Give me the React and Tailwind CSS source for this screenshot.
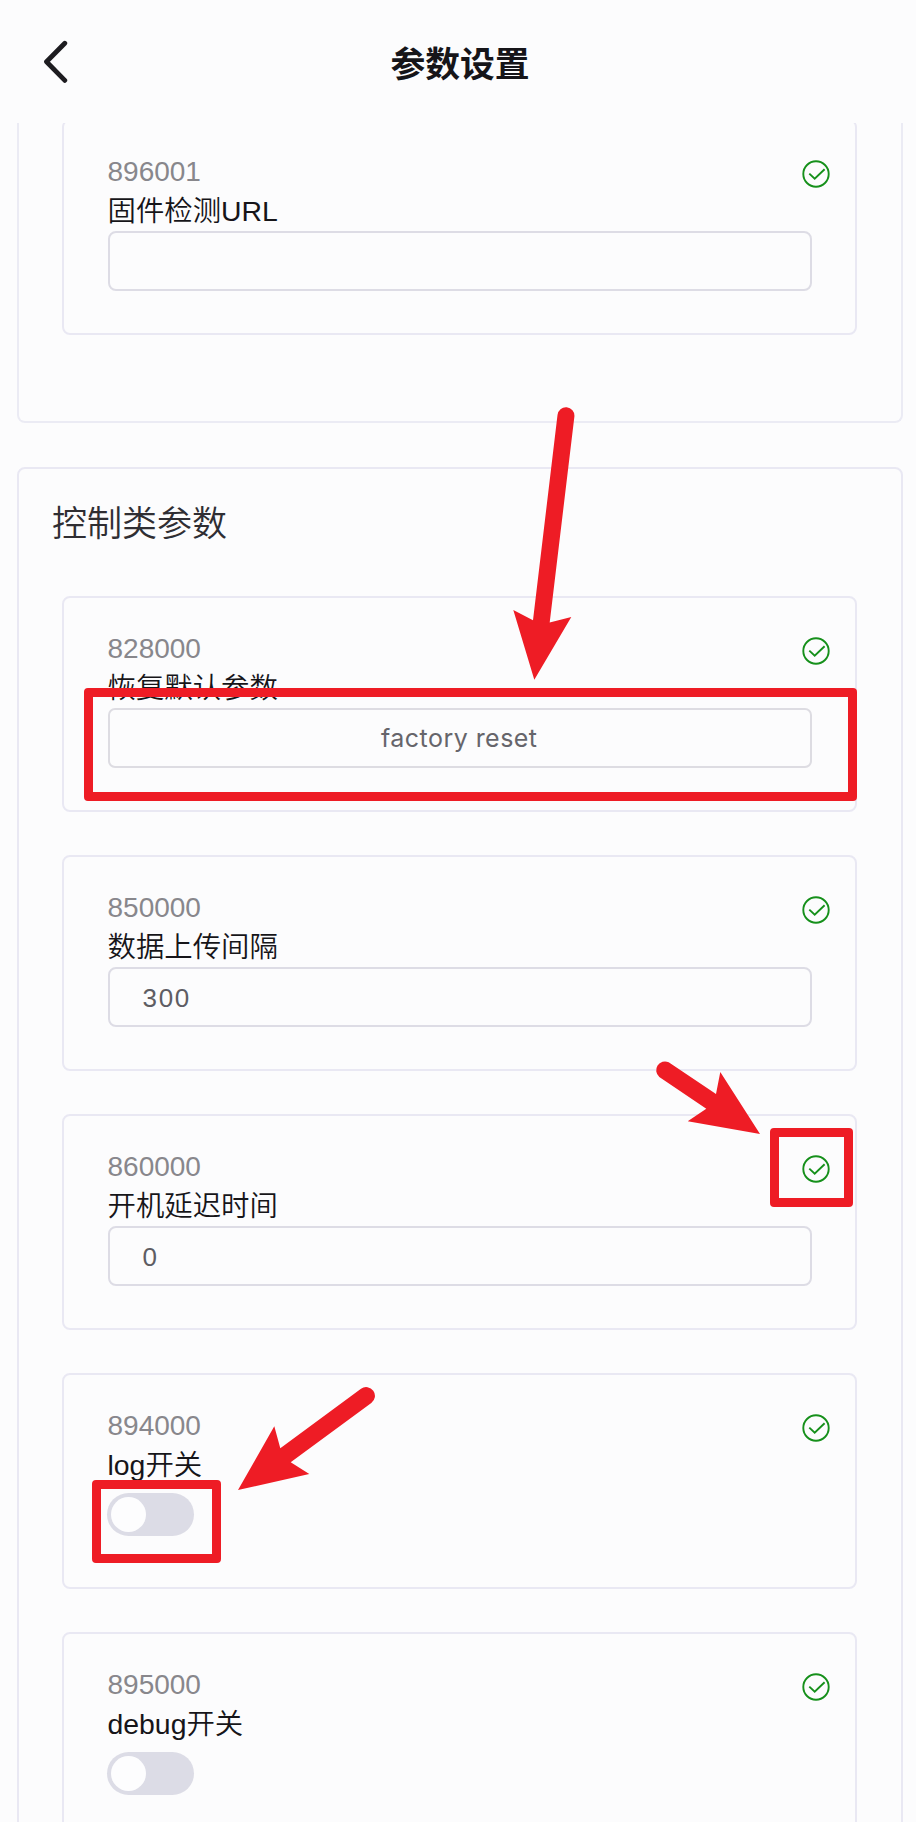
import React from "react";

const controlParams = [
  { code: "828000", label: "恢复默认参数", kind: "button", value: "factory reset" },
  { code: "850000", label: "数据上传间隔", kind: "input", value: "300" },
  { code: "860000", label: "开机延迟时间", kind: "input", value: "0" },
  { code: "894000", label: "log开关", kind: "switch" },
  { code: "895000", label: "debug开关", kind: "switch" },
];

function CheckIcon() {
  return (
    <svg className="h-7 w-7 shrink-0" viewBox="-14 -14 28 28" fill="none" stroke="#16901b" strokeWidth="1.9">
      <circle r="12.7" />
      <path d="M-6.7 -0.4 L-1.3 4.7 L8.6 -4.7" />
    </svg>
  );
}

function Control({ kind, value }) {
  if (kind === "switch") {
    return (
      <div className="mt-[8px] -ml-px flex h-[43px] w-[87px] items-center rounded-full bg-[#dcdce6] pl-[4px]">
        <div className="h-[35px] w-[35px] rounded-full bg-[#fdfdfe]" />
      </div>
    );
  }
  if (kind === "button") {
    return (
      <div className="flex h-[60px] items-center justify-center rounded-[7px] border-2 border-[#dddce2] pr-[1px] pt-[2px] font-['Inter',sans-serif] text-[25px] tracking-[0.45px] text-[#66656b]">
        {value}
      </div>
    );
  }
  return (
    <div className="flex h-[60px] items-center rounded-[8px] border-2 border-[#dddce5] pl-[33px] pt-[3px] text-[26px] tracking-[1.7px] text-[#5e5d63]">
      {value}
    </div>
  );
}

function ParamCard({ code, label, kind, value }) {
  return (
    <div className="flex h-[215.6px] shrink-0 flex-col rounded-[8px] border-2 border-[#e9e8f3] pl-[43.5px] pr-[43px] pt-[31px]">
      <div className="-mr-[18px] flex h-[39px] items-start justify-between">
        <span className="text-[28px] leading-[40px] text-[#88878c]">{code}</span>
        <span className="pt-[8px]">
          <CheckIcon />
        </span>
      </div>
      <div className="h-[40px] whitespace-nowrap text-[28.4px] font-[350] leading-[40px] text-[#161519]">{label}</div>
      <Control kind={kind} value={value} />
    </div>
  );
}

function Annotations() {
  return (
    <div className="pointer-events-none absolute inset-0">
      <svg className="absolute inset-0" width="916" height="1822" fill="#ee1c25">
        <path d="M557.5 415 A8.4 8.4 0 0 1 574.4 416.5 L549.7 622.5 L571.3 617 L534.3 679.7 L513.3 610 L533 620.2 Z" />
        <path d="M668.7 1062.3 L716 1094 L720.3 1072 L760 1134 L687.7 1121.3 L706.3 1108.7 L659.3 1077 A8.8 8.8 0 0 1 668.7 1062.3 Z" />
        <path d="M361 1388.7 A8.8 8.8 0 0 1 371.3 1403 L290.7 1462.3 L309.3 1474 L238 1490 L274.3 1426.3 L280.3 1448.3 Z" />
      </svg>
      <div className="absolute left-[84px] top-[688px] h-[113px] w-[773px] rounded-[4px] border-[9px] border-[#ee1c25]" />
      <div className="absolute left-[770px] top-[1128px] h-[79px] w-[83px] rounded-[4px] border-[9px] border-[#ee1c25]" />
      <div className="absolute left-[92px] top-[1480px] h-[83px] w-[129px] rounded-[4px] border-[9px] border-[#ee1c25]" />
    </div>
  );
}

export default function App() {
  return (
    <div className="relative flex h-[1822px] w-[916px] flex-col overflow-hidden bg-[#fcfcfd] font-['Liberation_Sans','Noto_Sans_CJK_SC',sans-serif]">
      <header className="grid h-[123px] shrink-0 grid-cols-[1fr_auto_1fr] items-center pl-[43px] pr-[39px]">
        <svg className="h-[44px] w-[28px]" viewBox="0 0 28 44" fill="none" stroke="#1d1c20" strokeWidth="4.8" strokeLinecap="round" strokeLinejoin="round">
          <path d="M21.8 3.2 L3.5 21.8 L21.8 40.4" />
        </svg>
        <h1 className="pt-[6px] text-[34.8px] font-bold leading-[50px] text-[#161519]">参数设置</h1>
        <span />
      </header>

      <main className="flex min-h-0 flex-1 flex-col overflow-hidden pl-[17px] pr-[13px]">
        <section className="h-[300px] shrink-0 rounded-b-[8px] border-2 border-t-0 border-[#ebebf4] pl-[43px] pr-[44px]">
          <div className="-mt-[4px]">
            <ParamCard code="896001" label="固件检测URL" kind="input" value="" />
          </div>
        </section>

        <section className="mt-[44px] flex h-[1400px] shrink-0 flex-col rounded-[8px] border-2 border-[#e9e8f3] pl-[43px] pr-[44px]">
          <h2 className="-ml-[10px] h-[127px] pt-[30px] text-[35px] font-[350] leading-[50px] text-[#2f2e33]">控制类参数</h2>
          <div className="flex flex-col gap-[43.5px]">
            {controlParams.map((p) => (
              <ParamCard key={p.code} {...p} />
            ))}
          </div>
        </section>
      </main>

      <Annotations />
    </div>
  );
}
